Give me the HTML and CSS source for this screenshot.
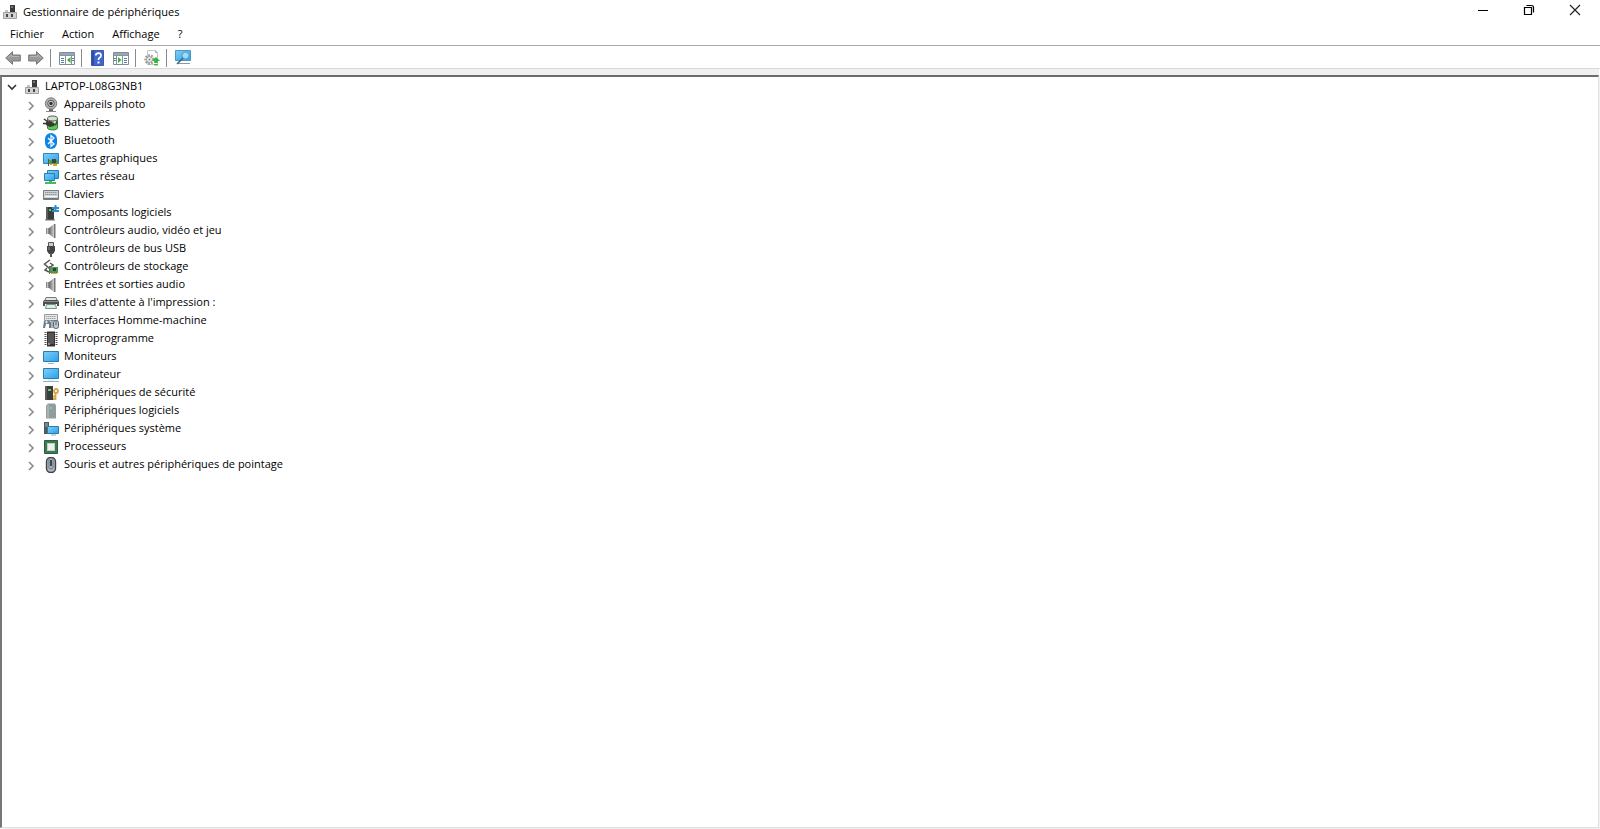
FILE: index.html
```html
<!DOCTYPE html>
<html lang="fr">
<head>
  <meta charset="utf-8">
  <title>Gestionnaire de périphériques</title>
  <link rel="stylesheet" href="styles.css">
</head>
<body>
  <!-- Formes réutilisées plusieurs fois -->
  <svg class="defs" aria-hidden="true">
    <defs>
      <linearGradient id="ecran" x1="0" y1="0" x2="1" y2="1">
        <stop offset="0" stop-color="#7fd0f8"/>
        <stop offset="1" stop-color="#2b9fec"/>
      </linearGradient>
      <linearGradient id="metal" x1="0" y1="0" x2="1" y2="0">
        <stop offset="0" stop-color="#666"/>
        <stop offset="1" stop-color="#d0d0d0"/>
      </linearGradient>
    </defs>
    <symbol id="chevron" viewBox="0 0 8 10">
      <path d="M2 1l4 4-4 4" fill="none" stroke="#8c8c8c" stroke-width="1.6"/>
    </symbol>
    <symbol id="peripherique" viewBox="0 0 16 16">
      <path d="M8 1h5v8H8z" fill="#3a3a3a"/>
      <path d="M9 2h2v2H9z" fill="#777"/>
      <path d="M3 6h3v3H3z" fill="#c4c4c4"/>
      <path d="M1.500 8.500h13v6h-13z" fill="#d2d2d2" stroke="#a0a0a0"/>
      <path d="M4 10h2v3H4zM9 10h2v3H9z" fill="#444"/>
    </symbol>
    <symbol id="haut-parleur" viewBox="0 0 16 16">
      <path d="M3 5h3v6H3z" fill="#8a8a8a"/>
      <path d="M6 5l5-4v14l-5-4z" fill="url(#metal)"/>
      <path d="M11 1h1.500v14H11z" fill="#777"/>
      <path d="M4.500 5v6" stroke="#c4c4c4"/>
    </symbol>
  </svg>

  <div class="window">
    <header class="titlebar">
      <svg class="icon" viewBox="0 0 16 16"><use href="#peripherique"/></svg>
      <h1>Gestionnaire de périphériques</h1>
      <div class="window-buttons">
        <button type="button" aria-label="Réduire">
          <svg viewBox="0 0 12 12"><path d="M1 6.500h10" stroke="#000"/></svg>
        </button>
        <button type="button" aria-label="Niveau inférieur">
          <svg viewBox="0 0 12 12"><path d="M1.500 3.500h7v7h-7zM3.500 1.500h5q2 0 2 2v5" fill="none" stroke="#000" stroke-width="1.200"/></svg>
        </button>
        <button type="button" aria-label="Fermer">
          <svg viewBox="0 0 12 12"><path d="M1 1l10 10M11 1L1 11" stroke="#222" stroke-width="1.200"/></svg>
        </button>
      </div>
    </header>

    <nav class="menubar">
      <button type="button">Fichier</button>
      <button type="button">Action</button>
      <button type="button">Affichage</button>
      <button type="button">?</button>
    </nav>

    <div class="toolbar">
      <div class="group">
        <button type="button" aria-label="Précédent">
          <svg class="icon" viewBox="0 0 16 16"><path d="M.7 8L7.500 1.700V5h7.800v6H7.500v3.300z" fill="#999" stroke="#777"/><path d="M3 8l3.500-3v1.500H14" fill="none" stroke="#b5b5b5"/></svg>
        </button>
        <button type="button" aria-label="Suivant">
          <svg class="icon" viewBox="0 0 16 16"><path d="M15.300 8L8.500 1.700V5H.7v6h7.800v3.300z" fill="#999" stroke="#777"/><path d="M2 6.500h7.500V5L13 8" fill="none" stroke="#b5b5b5"/></svg>
        </button>
      </div>
      <div class="group">
        <button type="button" aria-label="Afficher l'arborescence">
          <svg class="icon" viewBox="0 0 16 16"><path d="M.5 2.500h15v12H.5z" fill="#fff" stroke="#7f8c99"/><path d="M1 3h14v2H1z" fill="#9aa8b5"/><path d="M1 5.500h14M6.500 6v8M12.500 6v8" stroke="#8794a2"/><path d="M2 8.500h3M2 10.500h3M2 12.500h3M13 8.500h2M13 10.500h2" stroke="#5a7fa5"/><path d="M11.500 7v6L8 10z" fill="#35b52c"/></svg>
        </button>
      </div>
      <div class="group">
        <button type="button" aria-label="Aide">
          <svg class="icon" viewBox="0 0 16 16"><path d="M1.500.5h12v15h-12z" fill="#4267cc" stroke="#3a57b5"/><path d="M2 1h2v14H2z" fill="#2f4da8"/><path d="M5.700 5.500Q6 3.200 8.500 3.200T11 5.400Q11 6.800 9.500 7.800 8.500 8.500 8.500 10" fill="none" stroke="#fff" stroke-width="1.700"/><path d="M7.500 11.500h2v2h-2z" fill="#fff"/></svg>
        </button>
        <button type="button" aria-label="Volet d'actions">
          <svg class="icon" viewBox="0 0 16 16"><path d="M.5 2.500h15v12H.5z" fill="#fff" stroke="#7f8c99"/><path d="M1 3h14v2H1z" fill="#9aa8b5"/><path d="M1 5.500h14M3.500 6v8M9.500 6v8" stroke="#8794a2"/><path d="M11 8.500h3M11 10.500h3M11 12.500h3M1 8.500h2M1 10.500h2" stroke="#5a7fa5"/><path d="M5 7v6l3.500-3z" fill="#35b52c"/></svg>
        </button>
      </div>
      <div class="group">
        <button type="button" aria-label="Rechercher les modifications">
          <svg class="icon" viewBox="0 0 16 16"><path d="M3.500.5h8l2 2v12h-10z" fill="#fff" stroke="#c8c8c8"/><path d="M11.500.5v2h2" fill="none" stroke="#aaa"/><circle cx="5.500" cy="9.500" r="4.200" fill="none" stroke="#999" stroke-width="2" stroke-dasharray="1.700 1.300"/><circle cx="5.500" cy="9.500" r="3" fill="#eee" stroke="#999"/><circle cx="5.500" cy="9.500" r="1" fill="#888"/><path d="M12 7l4 4h-2.200v2h-3.600v-2H8zM10.200 14h3.600v1.500h-3.600z" fill="#30b83a"/></svg>
        </button>
      </div>
      <div class="group">
        <button type="button" aria-label="Analyser le matériel">
          <svg class="icon" viewBox="0 0 16 16"><path d="M.5.500h15v10H.5z" fill="url(#ecran)" stroke="#4a98c4"/><path d="M3 13h12v1H3z" fill="#8a989f"/><circle cx="10.500" cy="5.500" r="3.500" fill="#9bdafa" stroke="#5b9dc2"/><path d="M8 8L2 14" stroke="#41667e" stroke-width="1.600"/></svg>
        </button>
      </div>
    </div>

    <main class="panel">
      <ul class="tree">
        <li>
          <div class="row root">
            <button type="button" class="toggle" aria-label="Réduire LAPTOP-L08G3NB1"><svg viewBox="0 0 10 8"><path d="M1 2l4 4 4-4" fill="none" stroke="#333" stroke-width="1.600"/></svg></button>
            <svg class="icon" viewBox="0 0 16 16"><use href="#peripherique"/></svg>
            <span>LAPTOP-L08G3NB1</span>
          </div>
          <ul class="branch">
            <li class="row">
              <button type="button" class="toggle" aria-label="Développer Appareils photo"><svg viewBox="0 0 8 10"><use href="#chevron"/></svg></button>
              <svg class="icon" viewBox="0 0 16 16"><path d="M3 14.500h10" stroke="#888"/><path d="M6 12h4v2H6z" fill="#666"/><circle cx="8" cy="6.500" r="5.700" fill="#b5b5b5" stroke="#777"/><circle cx="8" cy="6.500" r="3.300" fill="#ccd0d3" stroke="#555"/><circle cx="8" cy="6.500" r="1.700" fill="#333"/></svg>
              <span>Appareils photo</span>
            </li>
            <li class="row">
              <button type="button" class="toggle" aria-label="Développer Batteries"><svg viewBox="0 0 8 10"><use href="#chevron"/></svg></button>
              <svg class="icon" viewBox="0 0 16 16"><path d="M4.500 4v9q0 2 5 2t5-2V4z" fill="#5cc85c" stroke="#3c7f3c"/><ellipse cx="9.500" cy="3.500" rx="5" ry="2.500" fill="#d5ddd3" stroke="#555"/><path d="M6 7.500q3.500 1 7-1" fill="none" stroke="#c5f0c0" stroke-width="1.500"/><path d="M1 4l4 3M0 8.500h4" stroke="#333" stroke-width="1.500"/><path d="M3 7l4-1 4 2v3l-4 1-4-2z" fill="#3c3732"/><path d="M10 10q4 0 4-4" fill="none" stroke="#444" stroke-width="1.500"/></svg>
              <span>Batteries</span>
            </li>
            <li class="row">
              <button type="button" class="toggle" aria-label="Développer Bluetooth"><svg viewBox="0 0 8 10"><use href="#chevron"/></svg></button>
              <svg class="icon" viewBox="0 0 16 16"><rect x="2" y="0" width="12" height="16" rx="6" fill="#0a84e6"/><path d="M5 5l6 6-3 2.500v-11L11 5l-6 6" fill="none" stroke="#fff" stroke-width="1.200"/></svg>
              <span>Bluetooth</span>
            </li>
            <li class="row">
              <button type="button" class="toggle" aria-label="Développer Cartes graphiques"><svg viewBox="0 0 8 10"><use href="#chevron"/></svg></button>
              <svg class="icon" viewBox="0 0 16 16"><path d="M.5 2.500h15v10H.5z" fill="url(#ecran)" stroke="#3188b8"/><path d="M6 9h9v4H6z" fill="#4f9a55"/><path d="M9 8h4v4H9z" fill="#394940"/><path d="M7 13h2v1H7zM10 13h4v2h-4z" fill="#e1a32b"/><path d="M5.500 8v7" stroke="#555"/></svg>
              <span>Cartes graphiques</span>
            </li>
            <li class="row">
              <button type="button" class="toggle" aria-label="Développer Cartes réseau"><svg viewBox="0 0 8 10"><use href="#chevron"/></svg></button>
              <svg class="icon" viewBox="0 0 16 16"><path d="M4.500 1.500h11v8h-11z" fill="url(#ecran)" stroke="#287fac"/><path d="M1.500 4.500h10v7h-10z" fill="url(#ecran)" stroke="#287fac"/><path d="M6 12h3v1h4v2H2v-2h4z" fill="#48bd52"/></svg>
              <span>Cartes réseau</span>
            </li>
            <li class="row">
              <button type="button" class="toggle" aria-label="Développer Claviers"><svg viewBox="0 0 8 10"><use href="#chevron"/></svg></button>
              <svg class="icon" viewBox="0 0 16 16"><path d="M.5 3.500h15v9H.5z" fill="#d0d4d6" stroke="#757d80"/><path d="M2 5.500h12M2 7.500h12" stroke="#90979a" stroke-dasharray="1.500 .5"/><path d="M2 9.500h12" stroke="#f7f7f7"/><path d="M1 11.500h14" stroke="#777"/></svg>
              <span>Claviers</span>
            </li>
            <li class="row">
              <button type="button" class="toggle" aria-label="Développer Composants logiciels"><svg viewBox="0 0 8 10"><use href="#chevron"/></svg></button>
              <svg class="icon" viewBox="0 0 16 16"><path d="M3 2h8v13H3z" fill="#3b3d3e"/><path d="M3 2h2v13H3z" fill="#5b5e60"/><path d="M6 4h2v2H6z" fill="#54d65e"/><path d="M2 15h10" stroke="#777"/><path d="M11.500 0h2v2H16v2h-2.500v1H16v2H9V5h2.500V4H9V2h2.500z" fill="#2c8dd5"/></svg>
              <span>Composants logiciels</span>
            </li>
            <li class="row">
              <button type="button" class="toggle" aria-label="Développer Contrôleurs audio, vidéo et jeu"><svg viewBox="0 0 8 10"><use href="#chevron"/></svg></button>
              <svg class="icon" viewBox="0 0 16 16"><use href="#haut-parleur"/></svg>
              <span>Contrôleurs audio, vidéo et jeu</span>
            </li>
            <li class="row">
              <button type="button" class="toggle" aria-label="Développer Contrôleurs de bus USB"><svg viewBox="0 0 8 10"><use href="#chevron"/></svg></button>
              <svg class="icon" viewBox="0 0 16 16"><path d="M5.500 1.500h5v4h-5z" fill="#ccc" stroke="#555"/><path d="M4 5h8v5l-2 3H6l-2-3z" fill="#444"/><path d="M8 12v4" stroke="#555" stroke-width="2"/><path d="M6 6v3" stroke="#888"/></svg>
              <span>Contrôleurs de bus USB</span>
            </li>
            <li class="row">
              <button type="button" class="toggle" aria-label="Développer Contrôleurs de stockage"><svg viewBox="0 0 8 10"><use href="#chevron"/></svg></button>
              <svg class="icon" viewBox="0 0 16 16"><path d="M7 1L1.500 5 6 9l4-3-3-2M4 9l-2 2 4 2" fill="none" stroke="#555" stroke-width="1.500"/><path d="M7 8h8v6H7z" fill="#4c9b50"/><path d="M10 9h3v3h-3z" fill="#334138"/><path d="M8 14h6v1H8z" fill="#d9a93c"/><path d="M6.500 7v8" stroke="#666"/></svg>
              <span>Contrôleurs de stockage</span>
            </li>
            <li class="row">
              <button type="button" class="toggle" aria-label="Développer Entrées et sorties audio"><svg viewBox="0 0 8 10"><use href="#chevron"/></svg></button>
              <svg class="icon" viewBox="0 0 16 16"><use href="#haut-parleur"/></svg>
              <span>Entrées et sorties audio</span>
            </li>
            <li class="row">
              <button type="button" class="toggle" aria-label="Développer Files d'attente à l'impression"><svg viewBox="0 0 8 10"><use href="#chevron"/></svg></button>
              <svg class="icon" viewBox="0 0 16 16"><path d="M3 2.500h10l1 3H2z" fill="#e3e5e6" stroke="#777"/><path d="M1 5h14l1 2v4h-2V9H2v2H0V7z" fill="#4b5153"/><path d="M1 6.500h14" stroke="#8c9395"/><path d="M3.500 9.500h9l1 4h-11z" fill="#d9f0e4" stroke="#74948a"/></svg>
              <span>Files d'attente à l'impression :</span>
            </li>
            <li class="row">
              <button type="button" class="toggle" aria-label="Développer Interfaces Homme-machine"><svg viewBox="0 0 8 10"><use href="#chevron"/></svg></button>
              <svg class="icon" viewBox="0 0 16 16"><path d="M1.500 1.500h13v6h-13z" fill="#e6e8ea" stroke="#999"/><path d="M3 3.500h10M3 5.500h10" stroke="#9da3a6" stroke-dasharray="1.500 .5"/><path d="M1 8q4-2 7 1v6H6v-4H3l-1 4H0z" fill="#6c7d89"/><path d="M3.500 7.500v3M2 9h3" stroke="#d9e6ef"/><rect x="10.500" y="7.500" width="5" height="8" rx="2" fill="#b9c7d1" stroke="#55636c"/><path d="M13 8v4M9 7v8" stroke="#55636c"/></svg>
              <span>Interfaces Homme-machine</span>
            </li>
            <li class="row">
              <button type="button" class="toggle" aria-label="Développer Microprogramme"><svg viewBox="0 0 8 10"><use href="#chevron"/></svg></button>
              <svg class="icon" viewBox="0 0 16 16"><path d="M2.500 1v14M13.500 1v14" stroke="#555" stroke-width="2" stroke-dasharray="1 1"/><path d="M4 .5h8v15H4z" fill="#333"/><path d="M5 2h6v11H5z" fill="#555"/><circle cx="6" cy="13" r="1" fill="#aaa"/></svg>
              <span>Microprogramme</span>
            </li>
            <li class="row">
              <button type="button" class="toggle" aria-label="Développer Moniteurs"><svg viewBox="0 0 8 10"><use href="#chevron"/></svg></button>
              <svg class="icon" viewBox="0 0 16 16"><path d="M.5 2.500h15v10H.5z" fill="url(#ecran)" stroke="#287fac"/><path d="M5 14.500h6" stroke="#a6b4bb"/></svg>
              <span>Moniteurs</span>
            </li>
            <li class="row">
              <button type="button" class="toggle" aria-label="Développer Ordinateur"><svg viewBox="0 0 8 10"><use href="#chevron"/></svg></button>
              <svg class="icon" viewBox="0 0 16 16"><path d="M.5 1.500h15v10H.5z" fill="url(#ecran)" stroke="#287fac"/><path d="M0 14.500h16" stroke="#9bb2be"/><path d="M5 13h6" stroke="#d6e1e6"/></svg>
              <span>Ordinateur</span>
            </li>
            <li class="row">
              <button type="button" class="toggle" aria-label="Développer Périphériques de sécurité"><svg viewBox="0 0 8 10"><use href="#chevron"/></svg></button>
              <svg class="icon" viewBox="0 0 16 16"><path d="M2 1h8v14H2z" fill="#3b3d3e"/><path d="M2 1h2v14H2z" fill="#5b5e60"/><path d="M5 4h3v2H5z" fill="#54d65e"/><circle cx="13" cy="6" r="2" fill="#fff" stroke="#d9a642" stroke-width="1.800"/><path d="M12.500 8v7M12 11.500h-2M12 14h-2" stroke="#d9a642" stroke-width="1.800"/></svg>
              <span>Périphériques de sécurité</span>
            </li>
            <li class="row">
              <button type="button" class="toggle" aria-label="Développer Périphériques logiciels"><svg viewBox="0 0 8 10"><use href="#chevron"/></svg></button>
              <svg class="icon" viewBox="0 0 16 16"><path d="M5 .5h7l1 2v13H3v-13z" fill="#929c9e"/><path d="M4 2h2v13H4z" fill="#a9b2b4"/><path d="M7 4h2v2H7z" fill="#6bd5c7"/></svg>
              <span>Périphériques logiciels</span>
            </li>
            <li class="row">
              <button type="button" class="toggle" aria-label="Développer Périphériques système"><svg viewBox="0 0 8 10"><use href="#chevron"/></svg></button>
              <svg class="icon" viewBox="0 0 16 16"><path d="M1 1h5v12H1z" fill="#50585c"/><path d="M2 3h3M2 5h3" stroke="#a8b2b6"/><path d="M4.500 5.500h11v7h-11z" fill="url(#ecran)" stroke="#287fac"/><path d="M8 14h5" stroke="#9baab2"/></svg>
              <span>Périphériques système</span>
            </li>
            <li class="row">
              <button type="button" class="toggle" aria-label="Développer Processeurs"><svg viewBox="0 0 8 10"><use href="#chevron"/></svg></button>
              <svg class="icon" viewBox="0 0 16 16"><path d="M1.500 1.500h13v13h-13z" fill="#397b55" stroke="#2b5f40"/><path d="M4 4h8v8H4z" fill="#c4d0c4"/><path d="M5 5h6v6H5z" fill="#f0f1ee"/></svg>
              <span>Processeurs</span>
            </li>
            <li class="row">
              <button type="button" class="toggle" aria-label="Développer Souris et autres périphériques de pointage"><svg viewBox="0 0 8 10"><use href="#chevron"/></svg></button>
              <svg class="icon" viewBox="0 0 16 16"><rect x="3.500" y=".5" width="9" height="15" rx="4" fill="#a9b4bf" stroke="#3d4349" stroke-width="1.400"/><path d="M6 2v9q2 2 4 0V2" fill="none" stroke="#6e7881"/><path d="M8 3v6" stroke="#222" stroke-width="1.500"/></svg>
              <span>Souris et autres périphériques de pointage</span>
            </li>
          </ul>
        </li>
      </ul>
    </main>
  </div>
</body>
</html>
```

FILE: styles.css
```css
* {
  box-sizing: border-box;
}

body {
  margin: 0;
  background-color: #fff;
  color: #000;
  font-family: "Open Sans", "Noto Sans", sans-serif;
  font-size: 11px;
  line-height: 16px;
}

button {
  display: flex;
  align-items: center;
  justify-content: center;
  padding: 0;
  border: none;
  background: none;
  color: inherit;
  font: inherit;
}

ul {
  margin: 0;
  padding: 0;
  list-style: none;
}

.defs {
  display: block;
  width: 0;
  height: 0;
}

.icon {
  display: block;
  flex: none;
  width: 16px;
  height: 16px;
}

.window {
  display: flex;
  flex-direction: column;
  min-height: 100vh;
}

/* Barre de titre */
.titlebar {
  display: flex;
  align-items: center;
  height: 24px;
  padding-left: 2px;
}

.titlebar h1 {
  flex: 1;
  margin: 0 0 0 5px;
  font-size: 11px;
  font-weight: normal;
}

.window-buttons {
  display: flex;
  padding-right: 2px;
}

.window-buttons button {
  width: 46px;
  height: 20px;
  margin-bottom: 4px;
}

.window-buttons svg {
  width: 12px;
  height: 12px;
}

.menubar {
  display: flex;
  height: 21px;
  padding: 0 0 2px 1px;
}

.menubar button {
  padding: 0 9px;
}

/* Barre d'outils */
.toolbar {
  display: flex;
  align-items: center;
  height: 24px;
  padding-top: 2px;
  border-top: 1px solid #a8a8a8;
  border-bottom: 1px solid #d9d9d9;
}

.group {
  display: flex;
  gap: 7px;
  padding: 0 6px 0 8px;
}

.group:first-child {
  padding-left: 5px;
}

.group + .group {
  border-left: 1px solid #8a8a8a;
}

.group button {
  height: 18px;
}

/* Arborescence */
.panel {
  flex: 1;
  margin: 6px 1px 1px 0;
  padding-top: 1px;
  border: 1px solid #e0e0e0;
  border-top: 2px solid #6b6b6b;
  border-left: 2px solid #777;
  box-shadow: 0 -6px 0 #f0f0f0, 1px 1px 0 #f0f0f0;
}

.row {
  display: flex;
  align-items: center;
  height: 18px;
}

.row span {
  margin: 0 0 2px 5px;
  white-space: nowrap;
}

.toggle {
  width: 22px;
  height: 18px;
}

.toggle svg {
  width: 8px;
  height: 10px;
}

.branch .toggle {
  padding-top: 2px;
}

.root .toggle svg {
  width: 10px;
  height: 8px;
}

.root .toggle {
  width: 20px;
}

.root .icon {
  margin-left: 2px;
}

.branch {
  padding-left: 18px;
}

.branch .icon {
  margin-left: 1px;
}
```
